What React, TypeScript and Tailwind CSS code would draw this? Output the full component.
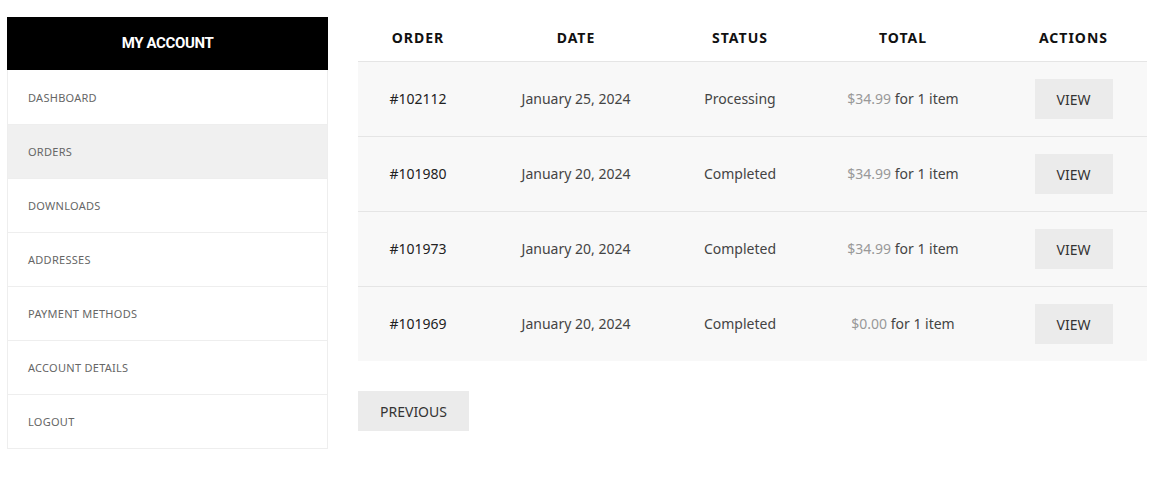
const menu = [
  "Dashboard",
  "Orders",
  "Downloads",
  "Addresses",
  "Payment methods",
  "Account details",
  "Logout",
];

const orders = [
  { id: "#102112", date: "January 25, 2024", status: "Processing", price: "$34.99" },
  { id: "#101980", date: "January 20, 2024", status: "Completed", price: "$34.99" },
  { id: "#101973", date: "January 20, 2024", status: "Completed", price: "$34.99" },
  { id: "#101969", date: "January 20, 2024", status: "Completed", price: "$0.00" },
];

const cols = "grid grid-cols-[120px_196px_132px_194px_147px]";

export default function App() {
  return (
    <div className="w-[1161px] h-[482px] bg-white flex gap-[30px] pl-[7px] pt-[17px] font-['Noto_Sans',sans-serif] text-[#333]">
      {/* sidebar */}
      <aside className="w-[321px] self-start">
        <div className="h-[53px] bg-black flex items-center justify-center">
          <span className="text-white font-bold text-[15px] font-['Roboto',sans-serif] tracking-tight">
            MY ACCOUNT
          </span>
        </div>
        <ul className="border border-t-0 border-[#eeeeee]">
          {menu.map((m, i) => (
            <li
              key={m}
              className={`h-[54px] flex items-center pl-5 pt-[2px] text-[11px] uppercase tracking-wide text-[#666] ${
                i > 0 ? "border-t border-[#eeeeee]" : ""
              } ${m === "Orders" ? "bg-[#f0f0f0]" : ""}`}
            >
              {m}
            </li>
          ))}
        </ul>
      </aside>

      {/* orders table */}
      <main className="w-[789px]">
        <div className={`${cols} h-[44px] items-start pt-[10px] text-center text-[14px] font-bold tracking-[1px] text-[#111]`}>
          <div>ORDER</div>
          <div>DATE</div>
          <div>STATUS</div>
          <div>TOTAL</div>
          <div>ACTIONS</div>
        </div>
        <div className="bg-[#f8f8f8]">
          {orders.map((o) => (
            <div
              key={o.id}
              className={`${cols} h-[75px] items-center text-center text-[14px] border-t border-[#e5e5e5]`}
            >
              <div className="text-[#222] pb-[2px]">{o.id}</div>
              <div className="text-[#444] pb-[2px]">{o.date}</div>
              <div className="text-[#444] pb-[2px]">{o.status}</div>
              <div className="text-[#444] pb-[2px]">
                <span className="text-[#999]">{o.price}</span> for 1 item
              </div>
              <div className="flex justify-center">
                <button className="w-[78px] h-[40px] bg-[#ebebeb] text-[14px] text-[#333]">VIEW</button>
              </div>
            </div>
          ))}
        </div>
        <button className="mt-[30px] w-[111px] h-[40px] bg-[#ebebeb] text-[14px] text-[#333]">
          PREVIOUS
        </button>
      </main>
    </div>
  );
}
